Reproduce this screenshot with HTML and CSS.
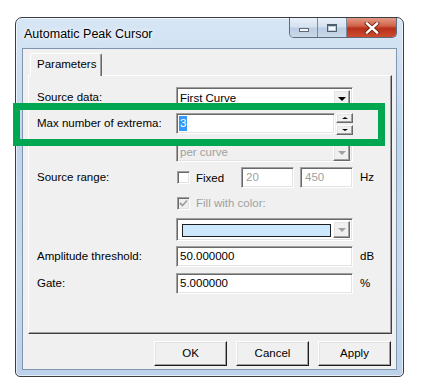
FILE: index.html
```html
<!DOCTYPE html>
<html lang="en">
<head>
    <meta charset="UTF-8">
    <title>Automatic Peak Cursor</title>
    <link rel="stylesheet" href="styles.css">
</head>
<body>
    <!-- dialog window -->
    <div class="window">
        <div class="titlebar">
            <span class="title">Automatic Peak Cursor</span>
            <div class="caption-buttons">
                <div class="cap-btn cap-min"><span class="min-icon"></span></div>
                <div class="cap-btn cap-max"><span class="max-icon"></span></div>
                <div class="cap-btn cap-close">
                    <svg width="16" height="12" viewBox="0 0 16 12">
                        <path d="M3 1.5 L13 10.5 M13 1.5 L3 10.5" stroke="#6b1a10" stroke-width="4" stroke-linecap="square"/>
                        <path d="M3 1.5 L13 10.5 M13 1.5 L3 10.5" stroke="#fff" stroke-width="2.4" stroke-linecap="square"/>
                    </svg>
                </div>
            </div>
        </div>

        <div class="client">
            <!-- tabs -->
            <div class="tabs">
                <div class="tab">Parameters</div>
            </div>

            <div class="panel">
                <div class="form">
                    <div class="label">Source data:</div>
                    <div class="combo sunken">
                        <span class="combo-text">First Curve</span>
                        <span class="drop-btn raised"><span class="arrow-down"></span></span>
                    </div>
                    <div></div>

                    <div class="label">Max number of extrema:</div>
                    <div class="spin">
                        <div class="field sunken"><span class="selected">3</span></div>
                        <div class="spin-btns">
                            <span class="spin-btn raised"><span class="arrow-up small"></span></span>
                            <span class="spin-btn raised"><span class="arrow-down small"></span></span>
                        </div>
                    </div>
                    <div></div>

                    <div class="label"></div>
                    <div class="combo sunken disabled">
                        <span class="combo-text">per curve</span>
                        <span class="drop-btn raised"><span class="arrow-down grey"></span></span>
                    </div>
                    <div></div>

                    <div class="label">Source range:</div>
                    <div class="range">
                        <span class="check sunken"></span>
                        <span class="check-label">Fixed</span>
                        <div class="field sunken small-field first disabled">20</div>
                        <div class="field sunken small-field disabled">450</div>
                    </div>
                    <div class="unit">Hz</div>

                    <div class="label"></div>
                    <div class="range short">
                        <span class="check sunken checked-grey">
                            <svg width="9" height="9" viewBox="0 0 9 9"><path d="M1 4 L3.5 6.5 L8 1.5" fill="none" stroke="#a0a0a0" stroke-width="1.8"/></svg>
                        </span>
                        <span class="check-label disabled">Fill with color:</span>
                    </div>
                    <div></div>

                    <div class="label"></div>
                    <div class="combo sunken color-combo">
                        <span class="swatch"></span>
                        <span class="drop-btn raised"><span class="arrow-down grey"></span></span>
                    </div>
                    <div></div>

                    <div class="label">Amplitude threshold:</div>
                    <div class="field sunken">50.000000</div>
                    <div class="unit">dB</div>

                    <div class="label">Gate:</div>
                    <div class="field sunken">5.000000</div>
                    <div class="unit">%</div>
                </div>
            </div>

            <!-- dialog buttons -->
            <div class="buttons">
                <div class="button raised">OK</div>
                <div class="button raised">Cancel</div>
                <div class="button raised">Apply</div>
            </div>
        </div>
    </div>

    <!-- highlight box drawn over the screenshot -->
    <div class="highlight"></div>
</body>
</html>
```

FILE: styles.css
```css
* {
    margin: 0;
    padding: 0;
    box-sizing: border-box;
}

body {
    font-family: 'Liberation Sans', Arial, sans-serif;
    font-size: 11.5px;
    color: #000;
    background: #fff;
}

/* window frame */
.window {
    margin: 17px 0 0 15px;
    width: 389px;
    height: 360px;
    border: 1px solid #3a3d42;
    border-radius: 7px 7px 5px 5px;
    padding: 0 6px 6px 6px;
    background: linear-gradient(180deg, #d7e6f5 0%, #bfd5ec 35%, #c8dbef 70%, #bcd2ea 100%);
    box-shadow: inset 0 0 0 1px rgba(255, 255, 255, 0.6);
}

.titlebar {
    height: 30px;
    display: flex;
    justify-content: space-between;
    align-items: flex-start;
}

.title {
    font-size: 12.5px;
    padding: 9px 0 0 2px;
    text-shadow: 0 0 6px #fff, 0 0 3px #fff;
}

.caption-buttons {
    display: flex;
    height: 20px;
    border: 1px solid #5e6b7b;
    border-top: none;
    border-radius: 0 0 5px 5px;
    overflow: hidden;
}

.cap-btn {
    height: 19px;
    display: flex;
    justify-content: center;
    align-items: center;
}

.cap-min,
.cap-max {
    width: 29px;
    background: linear-gradient(180deg, #e9f0f8 0%, #d5e2f0 45%, #bccee3 55%, #c9d9ea 100%);
    border-right: 1px solid #7b8a9c;
}

.cap-min {
    width: 28px;
}

.min-icon {
    width: 10px;
    height: 4px;
    margin-top: 5px;
    background: #f4f7fb;
    border: 1px solid #5d6a7b;
}

.max-icon {
    width: 10px;
    height: 8px;
    border: 1px solid #4f5c6c;
    border-top-width: 2px;
    background: #f4f7fb;
    box-shadow: inset 0 0 0 1px #c0cddc;
}

.cap-close {
    width: 49px;
    background: linear-gradient(180deg, #e39a86 0%, #d2654b 40%, #b9301a 55%, #cd4c30 100%);
}

/* client area */
.client {
    height: 322px;
    background: #f0f0f0;
    border: 1px solid #8096b0;
    padding: 4px 4px 0 5px;
}

.tabs {
    display: flex;
    padding-left: 2px;
    height: 22px;
    position: relative;
    z-index: 1;
}

.tab {
    width: 72px;
    height: 23px;
    padding: 4px 0 0 6px;
    background: #f0f0f0;
    border-top: 1px solid #fff;
    border-left: 1px solid #fff;
    border-right: 1px solid #696969;
    box-shadow: inset -1px 0 0 #a0a0a0;
    border-radius: 2px 2px 0 0;
}

.panel {
    width: 364px;
    height: 259px;
    border: 1px solid;
    border-color: #fff #404040 #404040 #fff;
    box-shadow: inset -1px -1px 0 #a0a0a0;
    padding: 11px 0 0 8px;
}

.form {
    display: grid;
    grid-template-columns: 139px 177px auto;
    grid-template-rows: 26px 28px 26px 29px 22px 28px 27px 21px;
    align-items: start;
}

.label {
    line-height: 21px;
}

.unit {
    line-height: 21px;
    padding-left: 7px;
}

/* 3d edges */
.sunken {
    border: 1px solid;
    border-color: #a0a0a0 #fff #fff #a0a0a0;
    box-shadow: inset 1px 1px 0 #696969, inset -1px -1px 0 #e3e3e3;
    background: #fff;
}

.raised {
    border: 1px solid;
    border-color: #fff #696969 #696969 #fff;
    box-shadow: inset -1px -1px 0 #a0a0a0, inset 1px 1px 0 #e3e3e3;
    background: #f0f0f0;
}

.field {
    height: 21px;
    line-height: 19px;
    padding-left: 3px;
}

.disabled {
    color: #a0a0a0;
}

.combo {
    height: 21px;
    display: flex;
    padding: 2px;
}

.combo-text {
    flex: 1;
    line-height: 17px;
    padding-left: 1px;
}

.combo.disabled {
    background: #f0f0f0;
}

.drop-btn {
    width: 17px;
    height: 17px;
    display: flex;
    justify-content: center;
    align-items: center;
}

.arrow-down {
    width: 0;
    height: 0;
    border-left: 4px solid transparent;
    border-right: 4px solid transparent;
    border-top: 4px solid #000;
}

.arrow-up {
    width: 0;
    height: 0;
    border-left: 4px solid transparent;
    border-right: 4px solid transparent;
    border-bottom: 4px solid #000;
}

.arrow-down.small,
.arrow-up.small {
    border-left-width: 3px;
    border-right-width: 3px;
}

.arrow-down.small {
    border-top-width: 2px;
}

.arrow-up.small {
    border-bottom-width: 2px;
}

.arrow-down.grey {
    border-top-color: #a0a0a0;
}

/* spin box */
.spin {
    display: flex;
    gap: 1px;
}

.spin .field {
    width: 161px;
    padding-left: 2px;
}

.selected {
    background: #3399ff;
    color: #fff;
    padding: 0 1px;
    line-height: 15px;
    display: inline-block;
}

.spin-btns {
    display: flex;
    flex-direction: column;
    gap: 2px;
}

.spin-btn {
    width: 17px;
    height: 10px;
    display: flex;
    justify-content: center;
    align-items: center;
}

/* range rows */
.range {
    display: flex;
    align-items: center;
    height: 21px;
}

.range.short {
    height: 14px;
}

.check {
    width: 13px;
    height: 13px;
    margin-left: 1px;
    display: flex;
    justify-content: center;
    align-items: center;
}

.checked-grey {
    background: #f0f0f0;
}

.check-label {
    padding-left: 6px;
}

.small-field {
    width: 53px;
    padding-left: 4px;
}

.small-field.first {
    margin-left: auto;
    margin-right: 6px;
}

/* color combo */
.color-combo {
    height: 23px;
    padding: 4px 2px 2px 5px;
    gap: 2px;
}

.color-combo .swatch {
    flex: 1;
    height: 13px;
    margin-top: 1px;
    background: #cce8ff;
    border: 1px solid #1e1e1e;
}

.color-combo .drop-btn {
    margin-top: -2px;
}

/* dialog buttons */
.buttons {
    display: flex;
    justify-content: flex-end;
    gap: 9px;
    padding: 7px 1px 0 0;
}

.button {
    width: 73px;
    height: 25px;
    line-height: 23px;
    text-align: center;
    border-color: #fff #1e1e1e #1e1e1e #fff;
}

/* green annotation box */
.highlight {
    position: absolute;
    left: 13px;
    top: 103px;
    width: 372px;
    height: 43px;
    border: 7px solid #00a650;
}
```
